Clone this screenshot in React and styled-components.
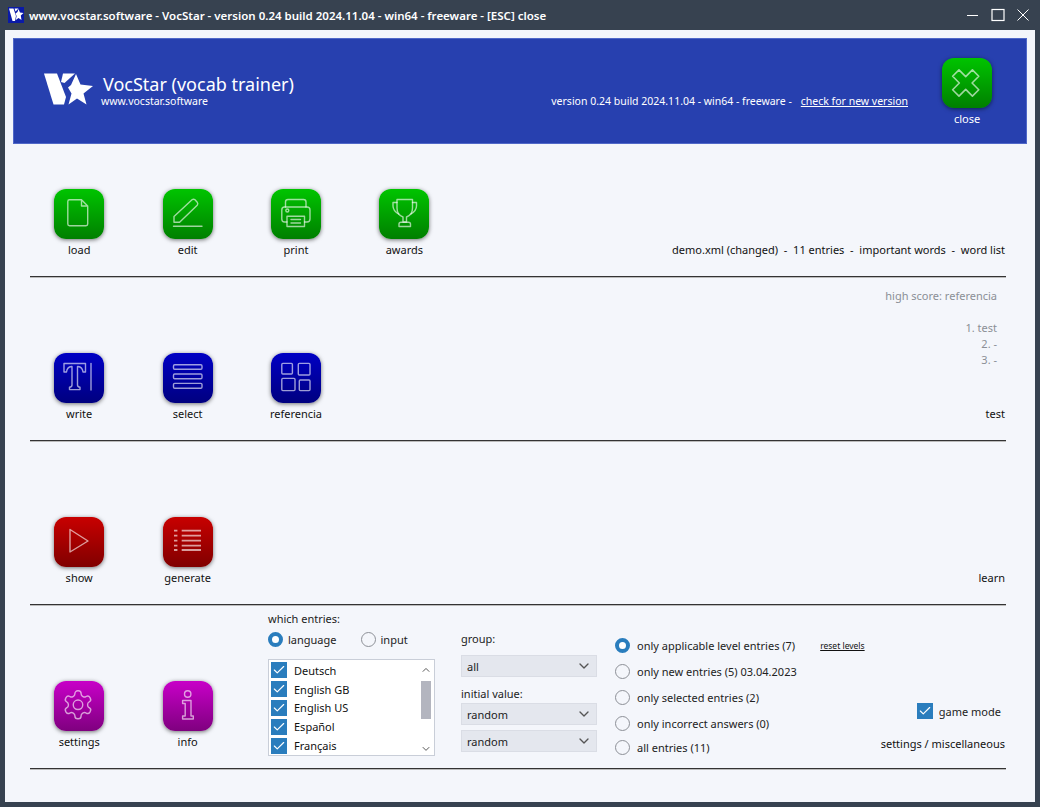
import React from 'react'
import styled, { createGlobalStyle } from 'styled-components'
import { ChevronUp, ChevronDown, Check } from 'lucide-react'

const GlobalStyle = createGlobalStyle`
  html, body {
    margin: 0;
    padding: 0;
    height: 100%;
    background: #374250;
  }
  body {
    font-family: "Noto Sans", "Open Sans", sans-serif;
    font-size: 11.5px;
    color: #111;
  }
`

const Window = styled.div`
  width: 1040px;
  height: 807px;
  display: flex;
  flex-direction: column;
  background: #374250;
  overflow: hidden;
`

const TitleBar = styled.div`
  height: 30px;
  flex: none;
  display: flex;
  align-items: center;
  padding: 0 8px;
  color: #fff;
  font-weight: 600;
  font-size: 11.5px;
`

const TitleText = styled.span`
  margin-left: 5px;
  flex: 1;
`

const WinButtons = styled.div`
  display: flex;
  align-items: center;
  gap: 12px;
  margin-right: 3px;
`

const Client = styled.div`
  flex: 1;
  margin: 0 5px 5px;
  padding: 8px 8px 0;
  background: #f4f6fb;
`

const Banner = styled.div`
  height: 106px;
  box-sizing: border-box;
  background: #2740af;
  border: 1px solid #5068c8;
  color: #fff;
  display: flex;
  padding: 19px 34px 0 30px;
`

const BrandBlock = styled.div`
  display: flex;
  align-items: flex-start;
  padding-top: 15px;
`

const BrandText = styled.div`
  margin-left: 10px;
  display: flex;
  flex-direction: column;
`

const BrandTitle = styled.div`
  font-size: 18px;
  line-height: 22px;
`

const BrandUrl = styled.div`
  font-size: 10.5px;
  line-height: 13px;
  margin-left: -2px;
`

const VersionLine = styled.div`
  margin-left: auto;
  padding-top: 36px;
  font-size: 10.5px;
  line-height: 15px;
  white-space: pre;
`

const VersionLink = styled.span`
  text-decoration: underline;
  margin-left: 9px;
`

const CloseBlock = styled.div`
  margin-left: 34px;
  width: 50px;
  display: flex;
  flex-direction: column;
  align-items: center;
  font-size: 11px;
`

const Section = styled.section`
  height: ${p => p.$h}px;
  box-sizing: border-box;
  margin: 0 21px 0 17px;
  border-bottom: 1px solid #333;
  box-shadow: 0 1px 0 #bbb;
  display: flex;
  align-items: flex-end;
  padding-bottom: 19px;
`

const Tiles = styled.div`
  display: flex;
  flex: none;
`

const Tile = styled.div`
  width: 108.4px;
  display: flex;
  flex-direction: column;
  align-items: center;
  padding-right: 10px;
  box-sizing: border-box;
  font-size: 11px;
  line-height: 15px;
  color: #111;
`

const IconBox = styled.div`
  width: 50px;
  height: 50px;
  margin-bottom: 3px;
  border-radius: 12px;
  background: linear-gradient(${p => p.$from}, ${p => p.$to});
  box-shadow: 0 1px 4px rgba(0, 0, 0, 0.55);
  flex: none;
  svg {
    display: block;
  }
`

const StatusCol = styled.div`
  margin-left: auto;
  margin-right: 1px;
  display: flex;
  flex-direction: column;
  align-items: flex-end;
  font-size: 11px;
  line-height: 15px;
  white-space: pre;
`

const Scores = styled.div`
  margin-right: 8px;
  margin-bottom: 38px;
  display: flex;
  flex-direction: column;
  align-items: flex-end;
  color: #8b8f96;
  line-height: 16px;
`

const ScoreTitle = styled.div`
  margin-bottom: 16px;
`

const SettingsSection = styled(Section)`
  align-items: flex-start;
  padding-bottom: 0;
`

const SettingsTiles = styled(Tiles)`
  width: 238px;
  padding: 77px 0 0 -8px;
  align-self: flex-end;
  margin-bottom: 19px;
  margin-left: 0;
`

const WhichCol = styled.div`
  width: 167px;
  margin-top: 6px;
  font-size: 11px;
`

const SmallLabel = styled.div`
  line-height: 15px;
  color: #222;
`

const RadioLine = styled.div`
  display: flex;
  gap: 24px;
  margin: 5px 0 11px;
`

const RadioItem = styled.label`
  display: flex;
  align-items: center;
  gap: 5px;
  height: 17px;
  line-height: 17px;
  color: #222;
`

const RadioDot = styled.span`
  width: 15px;
  height: 15px;
  box-sizing: border-box;
  border-radius: 50%;
  flex: none;
  background: ${p => (p.$on ? '#fff' : 'transparent')};
  border: ${p => (p.$on ? '4.5px solid #2a7dbd' : '1.5px solid #8d9097')};
`

const ListBox = styled.div`
  height: 97px;
  box-sizing: border-box;
  border: 1px solid #c9ced8;
  background: #fff;
  display: flex;
  padding: 1px 3px 0 2px;
`

const ListRows = styled.div`
  flex: 1;
  display: flex;
  flex-direction: column;
`

const ListRow = styled.div`
  display: flex;
  align-items: center;
  height: 19.4px;
  gap: 7px;
`

const CheckBox = styled.span`
  width: 16px;
  height: 16px;
  flex: none;
  background: #2a7dbd;
  color: #fff;
  display: flex;
  align-items: center;
  justify-content: center;
`

const ScrollBar = styled.div`
  width: 10px;
  display: flex;
  flex-direction: column;
  align-items: center;
  color: #555;
  padding-top: 3px;
`

const ScrollThumb = styled.div`
  width: 10px;
  height: 39px;
  background: #b3b5bf;
  margin: 5px 0 24px;
`

const GroupCol = styled.div`
  width: 136px;
  margin: 26px 0 0 26px;
  font-size: 11px;
`

const Select = styled.div`
  height: 22px;
  box-sizing: border-box;
  background: #e4e7ee;
  border: 1px solid #dadde5;
  display: flex;
  align-items: center;
  justify-content: space-between;
  padding: 0 4px 0 5px;
  margin-top: ${p => p.$mt || 0}px;
  color: #222;
`

const FieldLabel = styled(SmallLabel)`
  margin-top: ${p => p.$mt || 0}px;
`

const OptionsCol = styled.div`
  margin: 27px 0 0 18px;
  flex: 1;
  display: flex;
  flex-direction: column;
  font-size: 11px;
`

const OptionRow = styled(RadioItem)`
  height: 26px;
  gap: 7px;
  margin-top: ${p => p.$mt || 0}px;
`

const ResetLink = styled.span`
  font-size: 8.5px;
  text-decoration: underline;
  margin-left: 18px;
  color: #111;
`

const MiscCol = styled.div`
  align-self: flex-end;
  margin-bottom: 17px;
  margin-right: 1px;
  display: flex;
  flex-direction: column;
  align-items: flex-end;
  font-size: 11px;
  line-height: 15px;
  white-space: pre;
`

const GameMode = styled.div`
  display: flex;
  align-items: center;
  gap: 6px;
  margin: 0 4px 17px 0;
  color: #222;
`

const Glyph = ({ children }) => (
  <svg width="50" height="50" viewBox="0 0 50 50" fill="none" stroke="rgba(255,255,255,0.62)" strokeWidth="1.4" strokeLinejoin="round" strokeLinecap="round">
    {children}
  </svg>
)

const icons = {
  load: (
    <path d="M15.5 10.8H27.5L33.7 17V35Q33.7 36.7 32 36.7H15.5Q13.8 36.7 13.8 35V12.5Q13.8 10.8 15.5 10.8ZM27.5 10.8V17H33.7" />
  ),
  edit: (
    <>
      <path d="M11 33.2V27.5L29 10.8Q30.6 9.6 32 10.8L34.2 13.2Q35.4 14.8 34.2 16.2L16.6 33.2Z" />
      <path d="M10.5 37.3H39" />
    </>
  ),
  print: (
    <>
      <path d="M14.5 18V13Q14.5 10.5 17 10.5H32.5Q35 10.5 35 13V18" />
      <path d="M16 33H13.5Q10.8 33 10.8 30V21Q10.8 18 13.5 18H36Q39 18 39 21V30Q39 33 36 33H33.5" />
      <path d="M16 27.2H33.5V37.5H16ZM20 30.5H29.5M20 34H29.5" />
      <circle cx="16.3" cy="21.5" r="1.5" />
    </>
  ),
  awards: (
    <>
      <path d="M18 10.5H33.5V19Q33.5 26 27.5 28V33H24V28Q18 26 18 19Z" />
      <path d="M18 13.5H14V17Q14 21.5 19.5 25M33.5 13.5H37.5V17Q37.5 21.5 32 25" />
      <path d="M20 37.5V35Q20 33.2 22 33.2H29.5Q31.5 33.2 31.5 35V37.5Z" />
    </>
  ),
  write: (
    <>
      <path d="M10 10.5H31.5V19H29Q28.5 14 24 13.5H23.5V32Q23.5 34 26 34.3V36.6H15.5V34.3Q18 34 18 32V13.5H17.5Q13 14 12.5 19H10Z" />
      <path d="M37 10.5V37" />
    </>
  ),
  select: (
    <>
      <rect x="10.5" y="11.7" width="28.5" height="4.6" rx="1.2" />
      <rect x="10.5" y="21" width="28.5" height="4.8" rx="1.2" />
      <rect x="10.5" y="30.4" width="28.5" height="4.8" rx="1.2" />
    </>
  ),
  referencia: (
    <>
      <rect x="10.8" y="10.4" width="10.6" height="10.6" rx="1" />
      <rect x="27.3" y="10.4" width="11.7" height="11.6" rx="1" />
      <rect x="10.8" y="25.4" width="13.2" height="12.2" rx="1" />
      <rect x="28.3" y="27" width="10.7" height="10.6" rx="1" />
    </>
  ),
  show: <path d="M16 12.5L34 24L16 35Z" />,
  generate: (
    <g strokeWidth="1.8" strokeLinecap="butt">
      <path d="M11 13.7H14.4M11 18.7H14.4M11 23.7H14.4M11 28.7H14.4M11 33H14.4" />
      <path d="M18.7 13.7H38M18.7 18.7H38M18.7 23.7H38M18.7 28.7H38M18.7 33H38" />
    </g>
  ),
  settings: (
    <g transform="translate(7.2 7) scale(1.4)" strokeWidth="1">
      <path d="M12.22 2h-.44a2 2 0 0 0-2 2v.18a2 2 0 0 1-1 1.73l-.43.25a2 2 0 0 1-2 0l-.15-.08a2 2 0 0 0-2.73.73l-.22.38a2 2 0 0 0 .73 2.73l.15.1a2 2 0 0 1 1 1.72v.51a2 2 0 0 1-1 1.74l-.15.09a2 2 0 0 0-.73 2.73l.22.38a2 2 0 0 0 2.73.73l.15-.08a2 2 0 0 1 2 0l.43.25a2 2 0 0 1 1 1.73V20a2 2 0 0 0 2 2h.44a2 2 0 0 0 2-2v-.18a2 2 0 0 1 1-1.73l.43-.25a2 2 0 0 1 2 0l.15.08a2 2 0 0 0 2.73-.73l.22-.39a2 2 0 0 0-.73-2.73l-.15-.08a2 2 0 0 1-1-1.74v-.5a2 2 0 0 1 1-1.74l.15-.09a2 2 0 0 0 .73-2.73l-.22-.38a2 2 0 0 0-2.73-.73l-.15.08a2 2 0 0 1-2 0l-.43-.25a2 2 0 0 1-1-1.73V4a2 2 0 0 0-2-2z" />
      <circle cx="12" cy="12" r="3.4" />
    </g>
  ),
  info: (
    <>
      <circle cx="24.7" cy="13" r="3.2" />
      <path d="M19.6 19.5H28V35H30.3V38H19.6V35H22.2V22.5H19.6Z" />
    </>
  ),
  close: (
    <path
      transform="translate(23.7 25) rotate(45)"
      d="M-4.5 -14H4.5V-4.5H14V4.5H4.5V14H-4.5V4.5H-14V-4.5H-4.5Z"
      strokeWidth="1.6"
    />
  ),
}

const palette = {
  green: ['#00c400', '#007f00'],
  blue: ['#0000c4', '#00007f'],
  red: ['#c80000', '#800000'],
  purple: ['#c800c8', '#7f007f'],
}

const AppIcon = ({ name, color }) => (
  <IconBox $from={palette[color][0]} $to={palette[color][1]}>
    <Glyph>{icons[name]}</Glyph>
  </IconBox>
)

const ToolTile = ({ name, color }) => (
  <Tile>
    <AppIcon name={name} color={color} />
    {name}
  </Tile>
)

const Logo = () => (
  <svg width="49" height="32" viewBox="0 0 49 32" fill="#fff">
    <path d="M0 0.5H13L22 24L20 31.5H9.5Z" />
    <path d="M19 0.5H31L20.5 10L17 9Z" />
    <path d="M32 1L36.5 11.5L49 13L39.5 20.5L42.5 31.5L33 25.5L24.5 31.5L27.5 20.5L24 14.5L27 12Z" />
  </svg>
)

const TitleIcon = () => (
  <svg width="16" height="16" viewBox="0 0 16 16">
    <rect width="16" height="16" fill="#0a1aa8" />
    <path fill="#fff" d="M1 1.5H5.5L8 9L7 14H4.5ZM6.5 1.5H10.5L7.5 4.5ZM10.5 2L12 5.5L15.5 6L12.8 8.5L13.5 13L10.5 11L7.8 13L8.6 9L7.5 6.5L9.5 5Z" />
  </svg>
)

const WinIcons = () => (
  <WinButtons>
    <svg width="12" height="12" viewBox="0 0 12 12" stroke="#fff" fill="none"><path d="M0 6.5H11" /></svg>
    <svg width="14" height="14" viewBox="0 0 14 14" stroke="#fff" fill="none" strokeWidth="1.2"><rect x="1" y="1.5" width="12" height="11" /></svg>
    <svg width="12" height="12" viewBox="0 0 12 12" stroke="#fff" fill="none"><path d="M0.5 0.5L11.5 11.5M11.5 0.5L0.5 11.5" /></svg>
  </WinButtons>
)

const languages = ['Deutsch', 'English GB', 'English US', 'Español', 'Français']
const options = [
  'only new entries (5) 03.04.2023',
  'only selected entries (2)',
  'only incorrect answers (0)',
]

const App = () => (
  <>
    <GlobalStyle />
    <Window>
      <TitleBar>
        <TitleIcon />
        <TitleText>www.vocstar.software - VocStar - version 0.24 build 2024.11.04 - win64 - freeware - [ESC] close</TitleText>
        <WinIcons />
      </TitleBar>
      <Client>
        <Banner>
          <BrandBlock>
            <Logo />
            <BrandText>
              <BrandTitle>VocStar (vocab trainer)</BrandTitle>
              <BrandUrl>www.vocstar.software</BrandUrl>
            </BrandText>
          </BrandBlock>
          <VersionLine>
            version 0.24 build 2024.11.04 - win64 - freeware -
            <VersionLink>check for new version</VersionLink>
          </VersionLine>
          <CloseBlock>
            <AppIcon name="close" color="green" />
            close
          </CloseBlock>
        </Banner>

        <Section $h={133}>
          <Tiles>
            <ToolTile name="load" color="green" />
            <ToolTile name="edit" color="green" />
            <ToolTile name="print" color="green" />
            <ToolTile name="awards" color="green" />
          </Tiles>
          <StatusCol>demo.xml (changed)  -  11 entries  -  important words  -  word list</StatusCol>
        </Section>

        <Section $h={164}>
          <Tiles>
            <ToolTile name="write" color="blue" />
            <ToolTile name="select" color="blue" />
            <ToolTile name="referencia" color="blue" />
          </Tiles>
          <StatusCol>
            <Scores>
              <ScoreTitle>high score: referencia</ScoreTitle>
              <div>1. test</div>
              <div>2. -</div>
              <div>3. -</div>
            </Scores>
            test
          </StatusCol>
        </Section>

        <Section $h={164}>
          <Tiles>
            <ToolTile name="show" color="red" />
            <ToolTile name="generate" color="red" />
          </Tiles>
          <StatusCol>learn</StatusCol>
        </Section>

        <SettingsSection $h={164}>
          <SettingsTiles>
            <ToolTile name="settings" color="purple" />
            <ToolTile name="info" color="purple" />
          </SettingsTiles>
          <WhichCol>
            <SmallLabel>which entries:</SmallLabel>
            <RadioLine>
              <RadioItem><RadioDot $on />language</RadioItem>
              <RadioItem><RadioDot />input</RadioItem>
            </RadioLine>
            <ListBox>
              <ListRows>
                {languages.map(l => (
                  <ListRow key={l}>
                    <CheckBox><Check size={14} strokeWidth={2} /></CheckBox>
                    {l}
                  </ListRow>
                ))}
              </ListRows>
              <ScrollBar>
                <ChevronUp size={12} />
                <ScrollThumb />
                <ChevronDown size={12} />
              </ScrollBar>
            </ListBox>
          </WhichCol>
          <GroupCol>
            <SmallLabel>group:</SmallLabel>
            <Select $mt={9}>all<ChevronDown size={16} color="#555" /></Select>
            <FieldLabel $mt={9}>initial value:</FieldLabel>
            <Select $mt={2}>random<ChevronDown size={16} color="#555" /></Select>
            <Select $mt={5}>random<ChevronDown size={16} color="#555" /></Select>
          </GroupCol>
          <OptionsCol>
            <OptionRow>
              <RadioDot $on />only applicable level entries (7)<ResetLink>reset levels</ResetLink>
            </OptionRow>
            {options.map(o => (
              <OptionRow key={o}><RadioDot />{o}</OptionRow>
            ))}
            <OptionRow $mt={-2}><RadioDot />all entries (11)</OptionRow>
          </OptionsCol>
          <MiscCol>
            <GameMode>
              <CheckBox><Check size={14} strokeWidth={2} /></CheckBox>
              game mode
            </GameMode>
            settings / miscellaneous
          </MiscCol>
        </SettingsSection>
      </Client>
    </Window>
  </>
)

export default App
